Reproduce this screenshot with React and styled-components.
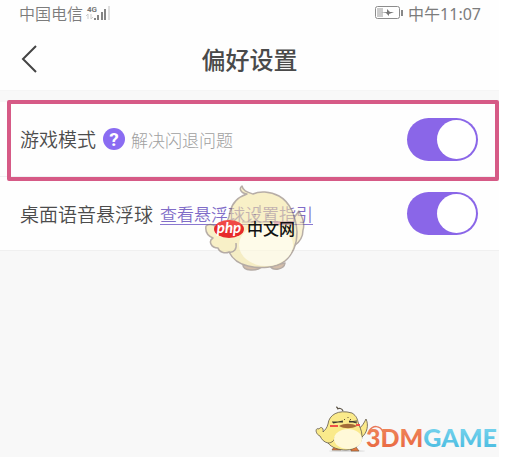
import React from "react";
import styled, { createGlobalStyle } from "styled-components";

const GlobalStyle = createGlobalStyle`
  * {
    box-sizing: border-box;
  }

  body {
    background: #fff;
    font-family: Roboto, "Noto Sans CJK SC", sans-serif;
    margin: 0;
  }
`;

const Screen = styled.main`
  background: #f8f8f8;
  display: flex;
  flex-direction: column;
  margin-right: 12px;
  min-height: 100vh;
  overflow: hidden;
  position: relative;
`;

const Top = styled.header`
  background: #fefefe;
  border-bottom: 1px solid #f5f5f5;
`;

const StatusBar = styled.div`
  align-items: center;
  color: #7c7c7c;
  display: flex;
  font-size: 16px;
  font-weight: 350;
  height: 26px;
  justify-content: space-between;
  padding: 0 18px 0 19px;
`;

const StatusGroup = styled.div`
  align-items: center;
  display: flex;
  gap: ${({ gap }) => gap}px;
`;

const Time = styled.time`
  font-family: "Noto Sans", "Noto Sans CJK SC", sans-serif;
  font-weight: 400;
`;

const TitleBar = styled.div`
  align-items: center;
  display: grid;
  grid-template-columns: 60px 1fr 60px;
  height: 64px;
  padding-top: 2px;
`;

const BackButton = styled.button`
  align-items: center;
  background: none;
  border: 0;
  cursor: pointer;
  display: flex;
  height: 40px;
  padding: 0 0 0 20px;
`;

const Title = styled.h1`
  color: #4a4a4a;
  font-size: 24px;
  font-weight: 500;
  line-height: 32px;
  margin: 0;
  padding-top: 4px;
  text-align: center;
`;

const List = styled.section`
  background: #fefefe;
  border-bottom: 1px solid #f0f0f0;
  margin-top: 11px;
`;

const Row = styled.div`
  align-items: center;
  border-top: ${({ divided }) => (divided ? "1px solid #f0f1f3" : "0")};
  display: flex;
  height: 74px;
  padding: 0 21px 0 20px;
  position: relative;
`;

const Label = styled.label`
  color: #4c4c4c;
  font-size: 19px;
  font-weight: 350;
  line-height: 24px;
  padding-top: 4px;
`;

const HelpButton = styled.button`
  align-items: center;
  background: #8a6cf2;
  border: 0;
  border-radius: 50%;
  color: #fff;
  cursor: pointer;
  display: flex;
  font-family: Roboto, sans-serif;
  font-size: 19px;
  font-weight: 700;
  height: 22px;
  justify-content: center;
  margin: 0 6px 0 7px;
  padding: 0;
  width: 22px;
`;

const Hint = styled.span`
  color: #a0a0a0;
  font-size: 17px;
  font-weight: 300;
  line-height: 24px;
  padding-top: 4px;
`;

const GuideLink = styled.a`
  border-bottom: 1px solid #8a78d0;
  color: #806cc8;
  font-size: 17px;
  font-weight: 350;
  line-height: 17px;
  margin: 4px 0 0 7px;
  text-decoration: none;
`;

const Toggle = styled.input`
  appearance: none;
  background: #8a66e8;
  border-radius: 22px;
  cursor: pointer;
  flex: none;
  height: 43px;
  margin: 0 0 0 auto;
  padding: 2px;
  width: 71px;

  &::before {
    background: #fff;
    border-radius: 50%;
    content: "";
    display: block;
    height: 39px;
    width: 39px;
  }

  &:checked::before {
    margin-left: auto;
  }
`;

const Highlight = styled.div`
  border: 4px solid #d65a86;
  border-radius: 2px;
  inset: -2px 0 -5px 7px;
  pointer-events: none;
  position: absolute;
  z-index: 1;
`;

const CenterMark = styled.div`
  left: 50%;
  margin-left: -45px;
  pointer-events: none;
  position: absolute;
  top: 183px;
  z-index: 2;

  svg {
    display: block;
  }
`;

const CornerMark = styled.div`
  bottom: 0;
  pointer-events: none;
  position: absolute;
  right: 0;

  svg {
    display: block;
  }
`;

const Signal = () => (
  <svg width="26" height="18" viewBox="0 0 26 18" aria-hidden="true">
    <text x="2" y="8" fontFamily="Roboto, sans-serif" fontSize="8" fontWeight="700" fill="#777">
      4G
    </text>
    <path d="M3 10v5M1 12l2-2M6 10v5M6 15l2-2" stroke="#ccc" fill="none" />
    <path d="M9 14h2v2H9zM12 11h2v5h-2zM16 8h2v8h-2zM19 5h2v11h-2z" fill="#858585" />
    <path d="M23 2h2v14h-2z" fill="#dedede" />
  </svg>
);

const Battery = () => (
  <svg width="28" height="14" viewBox="0 0 28 14" aria-hidden="true">
    <rect x=".5" y=".5" width="24" height="12" rx="2" fill="#fff" stroke="#8c8c8c" />
    <path d="M2 2h6v9H2z" fill="#ccc" />
    <path d="M26 4h2v6h-2z" fill="#888" />
    <path d="M6 7l6-1V3l3 3h4l-5 2v2l-3-3z" fill="#777" />
  </svg>
);

const CenterMascot = () => (
  <svg width="104" height="92" viewBox="0 0 104 92" aria-hidden="true">
    <g stroke="#85756a" strokeWidth="1.5" strokeLinejoin="round" opacity=".58">
      <path d="M38 82c0 6 14 7 20 1zM65 83c3 5 14 4 15-3z" fill="#b99472" />
      <path d="M87 38C89 34 92 31 94 28C98 35 100 41 98 47C98 54 95 59 89 63z" fill="#f7e9b0" />
      <path
        d="M37 3C34 5 35 10 42 11C33 14 27 20 25 29C24 37 20 43 15 47C11 42 5 40 1 43C0 49 3 53 8 55C3 58 6 65 13 65C14 69 20 71 24 69C28 77 34 81 43 83C55 86 71 85 80 78C88 71 92 61 92 49C91 33 85 19 74 13C65 8 54 8 48 11C42 9 38 8 37 3Z"
        fill="#f4e6a0"
      />
      <path d="M31 60c1 6-2 10-7 9" fill="none" />
      <ellipse cx="61" cy="62" rx="27" ry="21" fill="#fffadb" stroke="none" />
      <path d="M55 29v-7M50 34v-3M63 34v-3" fill="none" strokeWidth="1" />
    </g>
    <path d="M69 40h20" stroke="#e8a0bd" strokeWidth="3" opacity=".65" />
    <path d="M37 39h49" stroke="#9a8593" opacity=".5" />
    <ellipse cx="24" cy="46" rx="15" ry="9" fill="#e72a2a" />
    <ellipse cx="24" cy="42" rx="12" ry="5" fill="#ff7770" opacity=".4" />
    <text
      x="24"
      y="50"
      fill="#fff"
      fontFamily="Lato, sans-serif"
      fontSize="15"
      fontStyle="italic"
      fontWeight="700"
      textAnchor="middle"
    >
      php
    </text>
    <text
      x="42"
      y="52"
      fill="#111"
      fontFamily="Noto Sans CJK SC, sans-serif"
      fontSize="16"
      fontWeight="500"
    >
      中文网
    </text>
  </svg>
);

const CornerLogo = () => (
  <svg width="187" height="57" viewBox="0 0 187 57" aria-label="3DMGAME">
    <defs>
      <linearGradient id="warm" x1="0" y1="0" x2="0" y2="1">
        <stop offset="0" stopColor="#f08a5e" />
        <stop offset="1" stopColor="#e8653f" />
      </linearGradient>
      <linearGradient id="cool" x1="0" y1="0" x2="0" y2="1">
        <stop offset="0" stopColor="#80d8f0" />
        <stop offset="1" stopColor="#45b9df" />
      </linearGradient>
    </defs>
    <ellipse cx="35" cy="51" rx="18" ry="1" fill="#ddd" />
    <path d="M22 47l-2 3h9l-1-3zM39 48v3h8l-3-4z" fill="#e5783b" stroke="#805b3c" strokeWidth=".7" />
    <g stroke="#5f574a" strokeWidth=".8" strokeLinejoin="round" fill="#faea8b">
      <path d="M46 29c4-2 6-6 8-10 3 6 1 14-4 18z" />
      <path d="M40 13C26 9 17 15 16 24C15 28 13 30 11 32C12 28 9 26 7 29C3 27 3 34 8 36C10 40 12 42 16 43C20 48 27 50 34 50C44 50 50 43 50 36C50 30 47 26 46 22C45 17 43 15 40 13Z" />
      <path d="M31 11c-1-3-4-3-6-2M26 9c-1-1 0-2-2-2" fill="none" strokeWidth="1.2" />
      <path d="M16 43c4 0 7-3 7-6" fill="none" />
    </g>
    <ellipse cx="36" cy="39" rx="14" ry="10" fill="#fff9d8" />
    <path d="M20 22h11M21 23l10-2M37 22l8-1M37 21l8 2" stroke="#39372f" strokeWidth="1.2" />
    <path d="M32 19l1 1M39 19l-1 1M36 17v1" stroke="#615037" />
    <path d="M27 26c5-3 13-3 18 0-5 3-13 3-18 0z" fill="#a46c37" />
    <path d="M18 26h8M44 25h4" stroke="#ef5148" strokeWidth="2" />
    <path d="M57 31c4-6 11-6 14 1" fill="none" stroke="#e9785a" strokeWidth="1.5" />
    <text x="54" y="47" fontFamily="Lato, sans-serif" fontSize="25" fontWeight="900">
      <tspan fill="url(#warm)">3DM</tspan>
      <tspan fill="url(#cool)">GAME</tspan>
    </text>
  </svg>
);

export default function App() {
  return (
    <>
      <GlobalStyle />
      <Screen>
        <Top>
          <StatusBar>
            <StatusGroup gap={2}>
              中国电信
              <Signal />
            </StatusGroup>
            <StatusGroup gap={5}>
              <Battery />
              <Time>中午11:07</Time>
            </StatusGroup>
          </StatusBar>
          <TitleBar>
            <BackButton aria-label="返回">
              <svg width="18" height="30" viewBox="0 0 18 30">
                <path d="M16 2L3 15l13 13" fill="none" stroke="#444" strokeWidth="2" />
              </svg>
            </BackButton>
            <Title>偏好设置</Title>
          </TitleBar>
        </Top>
        <List>
          <Row>
            <Label htmlFor="game">游戏模式</Label>
            <HelpButton aria-label="帮助">?</HelpButton>
            <Hint>解决闪退问题</Hint>
            <Toggle id="game" type="checkbox" defaultChecked />
            <Highlight />
          </Row>
          <Row divided>
            <Label htmlFor="ball">桌面语音悬浮球</Label>
            <GuideLink href="#guide">查看悬浮球设置指引</GuideLink>
            <Toggle id="ball" type="checkbox" defaultChecked />
          </Row>
        </List>
        <CenterMark>
          <CenterMascot />
        </CenterMark>
        <CornerMark>
          <CornerLogo />
        </CornerMark>
      </Screen>
    </>
  );
}
